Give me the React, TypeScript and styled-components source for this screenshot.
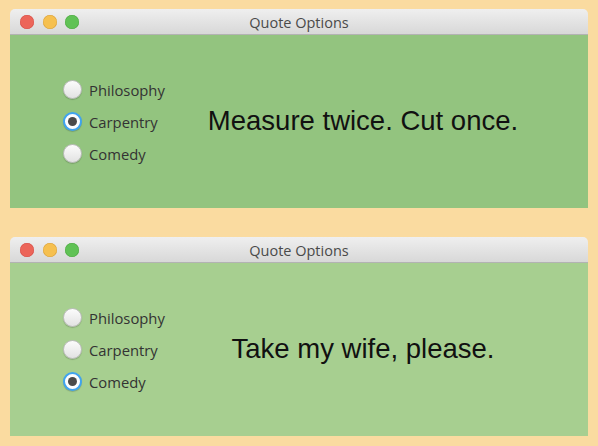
import React, { useState } from "react";
import styled, { createGlobalStyle } from "styled-components";

const Global = createGlobalStyle`
  html, body { margin: 0; padding: 0; background: #fadba0; }
  body { font-family: "Liberation Sans", Arial, sans-serif; }
`;

const Page = styled.div`
  width: 598px;
  height: 446px;
  box-sizing: border-box;
  padding: 9px 10px 10px 10px;
  display: flex;
  flex-direction: column;
  gap: 29px;
`;

const Window = styled.div`
  display: flex;
  flex-direction: column;
  border-radius: 5px 5px 0 0;
  overflow: hidden;
`;

const TitleBar = styled.div`
  position: relative;
  height: 25px;
  background: linear-gradient(#efefef, #d8d8d8);
  border-bottom: 1px solid #b3b3b3;
  display: flex;
  align-items: center;
  justify-content: center;
`;

const Lights = styled.div`
  position: absolute;
  left: 10px;
  top: 6px;
  display: flex;
  gap: 8.5px;
`;

const Light = styled.span<{ $c: string; $b: string }>`
  width: 14px;
  height: 14px;
  border-radius: 50%;
  background: ${(p) => p.$c};
  box-shadow: inset 0 0 0 0.5px ${(p) => p.$b};
`;

const Title = styled.div`
  font-family: "Open Sans", "Liberation Sans", sans-serif;
  font-size: 14.5px;
  color: #4a4a4a;
  margin-top: 1px;
`;

const Body = styled.div<{ $bg: string }>`
  height: 173px;
  background: ${(p) => p.$bg};
  display: flex;
  align-items: center;
  padding-left: 53px;
  padding-right: 27px;
`;

const Group = styled.div`
  width: 102px;
  display: flex;
  flex-direction: column;
  gap: 12px;
`;

const Option = styled.label`
  display: flex;
  align-items: center;
  height: 20px;
  gap: 7px;
  cursor: default;
`;

const Circle = styled.span<{ $on: boolean }>`
  width: 19px;
  height: 19px;
  box-sizing: border-box;
  border-radius: 50%;
  display: flex;
  align-items: center;
  justify-content: center;
  background: ${(p) => (p.$on ? "#fdfdfd" : "linear-gradient(#fcfcfc, #e2e2e2)")};
  border: ${(p) => (p.$on ? "2px solid #40a4f0" : "1px solid #bdbdbd")};
  box-shadow: 0 1px 1px rgba(0, 0, 0, 0.18);
`;

const Dot = styled.span`
  width: 9px;
  height: 9px;
  border-radius: 50%;
  background: #4a4a4a;
`;

const Label = styled.span`
  font-family: "Open Sans", "Liberation Sans", sans-serif;
  font-size: 14.8px;
  color: #333333;
`;

const Quote = styled.div`
  flex: 1;
  text-align: center;
  font-family: "Liberation Sans", Arial, sans-serif;
  font-size: 27.5px;
  color: #111111;
  margin-top: -2px;
`;

const options = ["Philosophy", "Carpentry", "Comedy"];
const quotes: Record<string, string> = {
  Philosophy: "I think, therefore I am.",
  Carpentry: "Measure twice. Cut once.",
  Comedy: "Take my wife, please.",
};

function QuoteWindow({ initial, bg }: { initial: string; bg: string }) {
  const [sel, setSel] = useState(initial);
  return (
    <Window>
      <TitleBar>
        <Lights>
          <Light $c="#ec6559" $b="#d6504a" />
          <Light $c="#f6c04f" $b="#d9a23e" />
          <Light $c="#60c255" $b="#4fa944" />
        </Lights>
        <Title>Quote Options</Title>
      </TitleBar>
      <Body $bg={bg}>
        <Group>
          {options.map((o) => (
            <Option key={o} onClick={() => setSel(o)}>
              <Circle $on={sel === o}>{sel === o && <Dot />}</Circle>
              <Label>{o}</Label>
            </Option>
          ))}
        </Group>
        <Quote>{quotes[sel]}</Quote>
      </Body>
    </Window>
  );
}

export default function App() {
  return (
    <>
      <Global />
      <Page>
        <QuoteWindow initial="Carpentry" bg="#93c47f" />
        <QuoteWindow initial="Comedy" bg="#a7cf90" />
      </Page>
    </>
  );
}
